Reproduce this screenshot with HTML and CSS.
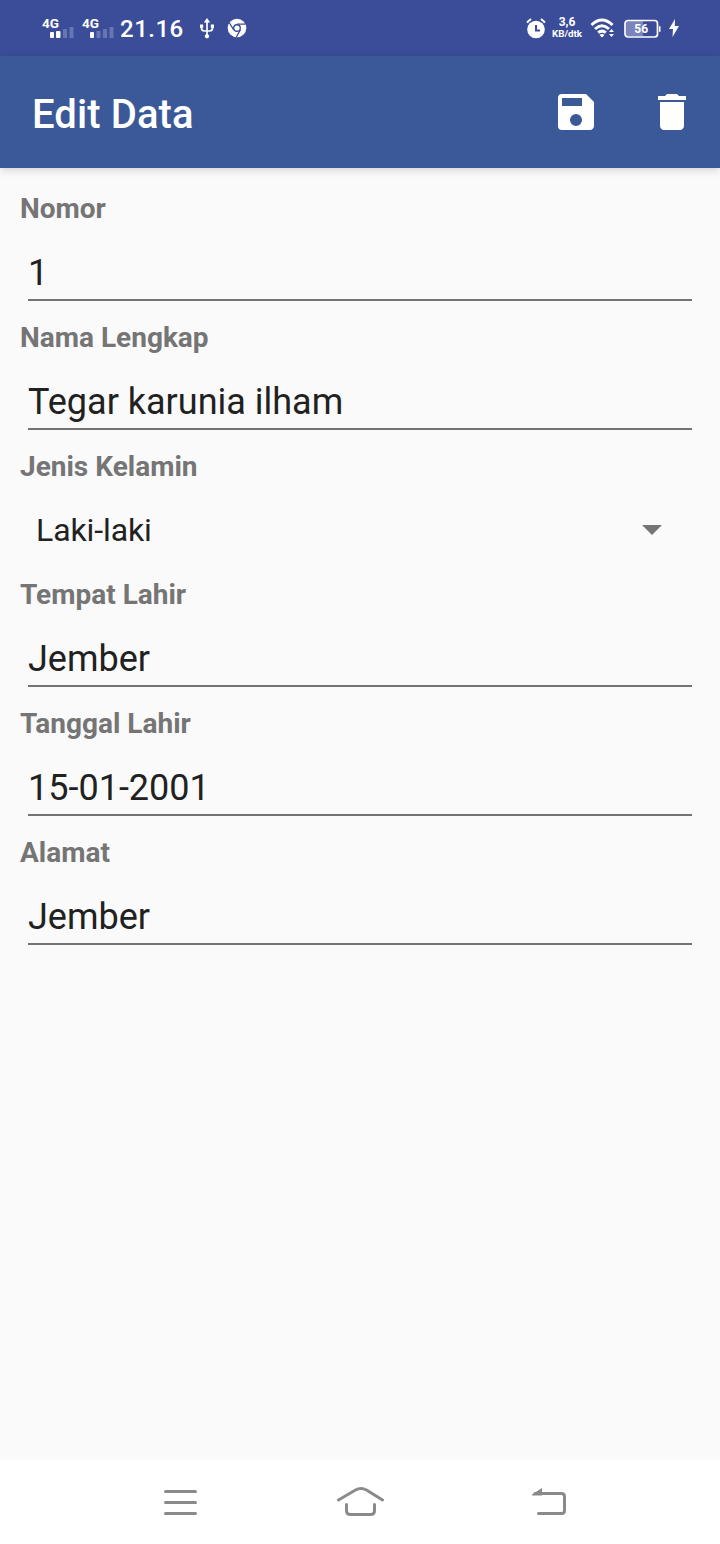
FILE: index.html
```html
<!DOCTYPE html>
<html lang="id">
<head>
<meta charset="utf-8">
<title>Edit Data</title>
<link rel="stylesheet" href="styles.css">
</head>
<body>
<div class="screen">
  <header class="status">
    <div class="status-left">
      <svg class="signal" width="32" height="24" viewBox="0 0 32 24"><text class="net" x="0" y="11" textLength="17" lengthAdjust="spacingAndGlyphs">4G</text><rect x="8" y="15" width="4" height="6" rx="1"/><rect x="14" y="14" width="4.500" height="7" rx="1"/><path class="dim" d="M21 12h4v9h-4zM27.500 10h4v11h-4z"/></svg>
      <svg class="signal" width="32" height="24" viewBox="0 0 32 24"><text class="net" x="0" y="11" textLength="17" lengthAdjust="spacingAndGlyphs">4G</text><rect x="8" y="15" width="4" height="6" rx="1"/><path class="dim" d="M14.500 14h4v7h-4zM21 12h4v9h-4zM27.500 10h4v11h-4z"/></svg>
      <span class="clock">21.16</span>
      <svg class="usb" width="16" height="22" viewBox="0 0 16 22"><path d="M8 1l3.200 4.500H4.800zM5.900 18.500a2.200 2.200 0 1 0 4.200 0a2.200 2.200 0 0 0-4.200 0zM1 7.500h3.200v3.200H1zM11.800 7.500H15v3.200h-3.200z"/><path class="line thin" d="M8 4v14M2.500 9v2q0 3 3 3H10.500q3 0 3-3V9"/></svg>
      <svg class="chrome" width="20" height="20" viewBox="0 0 20 20"><circle cx="10" cy="10" r="9.300"/><circle class="gap" cx="10" cy="10" r="3.300"/><path class="gap-line" d="M10 6.200h8.500M6.700 11.900L2.100 4.500M13.300 11.900L9.400 19"/><circle cx="10" cy="10" r="2.600"/></svg>
    </div>
    <div class="status-right">
      <svg width="20" height="22" viewBox="0 0 20 22"><circle cx="10" cy="12.500" r="8.800"/><path class="line" d="M1 5.500L5 2M19 5.500L15 2"/><path class="hands" d="M10 8V13.500h4"/></svg>
      <div class="speed"><span>3,6</span><span>KB/dtk</span></div>
      <svg class="wifi" width="26" height="22" viewBox="0 0 26 22"><path class="arc" d="M1.500 8Q12 -2 22.500 8M5 12Q12 5.500 19 12M8.200 15.700Q12 12.500 15.800 15.700"/><path d="M9.500 18Q12 16 14.500 18L12 20.500zM19 15l2.500-3 2.500 3zM19 17l2.500 3 2.500-3z"/></svg>
      <svg class="battery" width="37" height="20" viewBox="0 0 37 20"><rect class="charge" x="2" y="3" width="17" height="15"/><rect class="case" x="1" y="2.500" width="32.500" height="16.500" rx="3"/><rect x="35" y="8" width="1.500" height="6" rx=".7"/><text class="level" x="17.200" y="15.200" text-anchor="middle">56</text></svg>
      <svg class="bolt" width="10" height="18" viewBox="0 0 10 18"><path d="M6 0L0 10h4L3.500 18L10 7H5.800z"/></svg>
    </div>
  </header>
  <div class="toolbar">
    <h1>Edit Data</h1>
    <svg class="save" width="48" height="48" viewBox="0 0 24 24"><path d="M17 3H5a2 2 0 0 0-2 2v14a2 2 0 0 0 2 2h14c1.100 0 2-.9 2-2V7l-4-4zm-5 16a3 3 0 1 1 0-6 3 3 0 0 1 0 6zm3-10H5V5h10v4z"/></svg>
    <svg width="48" height="48" viewBox="0 0 24 24"><path d="M6 19c0 1.100.9 2 2 2h8c1.100 0 2-.9 2-2V7H6v12zM19 4h-3.500l-1-1h-5l-1 1H5v2h14V4z"/></svg>
  </div>
  <main class="form">
    <div class="label">Nomor</div>
    <div class="field">1</div>
    <div class="label">Nama Lengkap</div>
    <div class="field">Tegar karunia ilham</div>
    <div class="label">Jenis Kelamin</div>
    <div class="select"><span>Laki-laki</span><svg width="20" height="10" viewBox="0 0 20 10"><path d="M0 0h20L10 10z"/></svg></div>
    <div class="label">Tempat Lahir</div>
    <div class="field">Jember</div>
    <div class="label">Tanggal Lahir</div>
    <div class="field">15-01-2001</div>
    <div class="label">Alamat</div>
    <div class="field">Jember</div>
  </main>
  <nav class="navbar">
    <svg width="34" height="30" viewBox="0 0 34 30"><path d="M1.500 4.500h30M1.500 15.500h30M1.500 26.500h30"/></svg>
    <svg class="home" width="48" height="34" viewBox="0 0 48 34"><path d="M1.500 15L18.500 5Q24 2 29.500 5L45.500 15M9.500 19.500V25.500Q9.500 29.500 13.500 29.500H33.500Q37.500 29.500 37.500 25.500V19.500"/></svg>
    <svg width="36" height="30" viewBox="0 0 36 30"><path class="head" d="M0 7.500L10 1V8.500H0z"/><path d="M3 6.500H29.500Q32.500 6.500 32.500 9.500V23.500Q32.500 26.500 29.500 26.500H6.500"/></svg>
  </nav>
</div>
</body>
</html>
```
FILE: styles.css
```css
* { box-sizing: border-box; }
body { margin: 0; font-family: Roboto, sans-serif; }
svg { display: block; flex: none; }
.screen { width: 720px; height: 1544px; display: flex; flex-direction: column; background: #fafafa; }
.status { height: 56px; flex: none; padding: 0 41px 0 42px; background: #3b4d98; color: #fff; display: flex; justify-content: space-between; }
.status svg { fill: #fff; }
.status-left, .status-right { display: flex; align-items: center; }
.signal { margin: 2px 8px 0 0; }
.net { font-size: 13.500px; font-weight: 700; }
.status .dim { fill: #6775b2; }
.clock { width: 78px; margin-left: -2px; font-size: 24px; font-weight: 500; letter-spacing: .5px; line-height: 28px; padding-top: 2px; }
.usb { margin-left: 1px; }
.chrome { margin-left: 12px; }
.line { fill: none; stroke: #fff; stroke-width: 2; }
.thin { stroke-width: 1.700; }
.status .gap { fill: #3b4d98; stroke: #3b4d98; stroke-width: 1.300; }
.gap-line { fill: none; stroke: #3b4d98; stroke-width: 1.300; }
.hands { fill: none; stroke: #3b4d98; stroke-width: 2; }
.speed { width: 32px; margin-left: 5px; display: flex; flex-direction: column; align-items: center; font-weight: 700; font-size: 9.800px; line-height: 11px; }
.speed span:first-child { font-size: 12px; }
.wifi { margin-left: 7px; }
.arc { fill: none; stroke: #fff; stroke-width: 3; }
.battery { margin-left: 8px; }
.status .case { fill: none; stroke: #fff; stroke-width: 1.700; }
.status .charge { fill: #7985bc; }
.level { font-size: 12px; font-weight: 700; }
.bolt { margin-left: 8px; }
.toolbar { height: 112px; flex: none; padding: 0 24px 0 32px; display: flex; align-items: center; background: #3b5998; color: #fff; box-shadow: 0 2px 8px rgba(0,0,0,.17); }
.toolbar h1 { margin: 6px auto 0 0; font-size: 40px; font-weight: 500; line-height: 48px; letter-spacing: .1px; }
.toolbar svg { fill: #fff; }
.save { margin-right: 48px; }
.form { flex: 1; padding: 22px 28px 0 20px; }
.label { height: 38px; line-height: 38px; font-size: 28px; font-weight: 700; color: #757575; }
.field { height: 73px; margin: 0 0 18px 8px; padding-top: 24px; font-size: 36px; line-height: 42px; color: #212121; border-bottom: 2px solid #737373; }
.select { height: 90px; padding: 0 30px 2px 16px; display: flex; align-items: center; justify-content: space-between; font-size: 32px; letter-spacing: -.1px; color: #212121; }
.select svg { fill: #757575; }
.navbar { height: 84px; flex: none; background: #fff; display: flex; align-items: center; justify-content: space-between; padding: 0 152px 0 164px; }
.navbar svg { fill: none; stroke: #8a8a8a; stroke-width: 3; stroke-linecap: round; }
.navbar .home { margin-right: 8px; }
.navbar .head { fill: #8a8a8a; stroke: none; }
```
